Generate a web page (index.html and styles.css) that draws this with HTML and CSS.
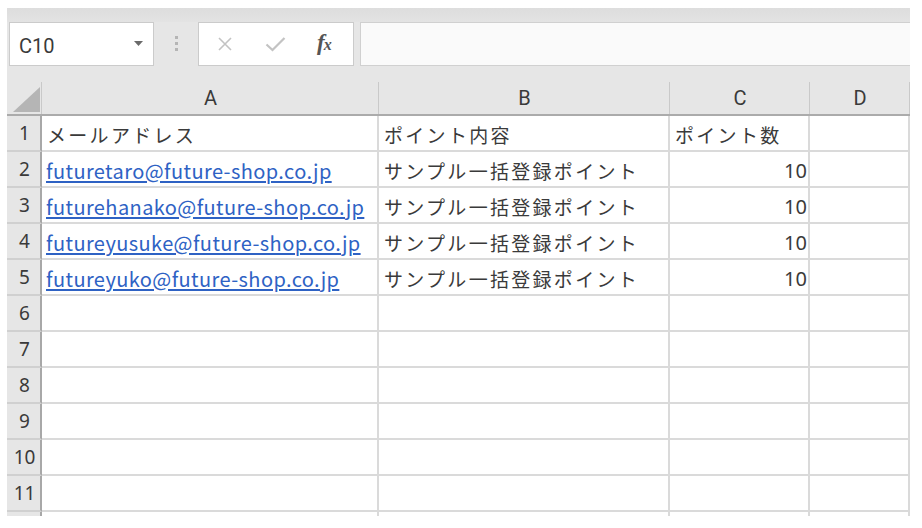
FILE: index.html
```html
<!DOCTYPE html>
<html lang="ja">
<head>
<meta charset="utf-8">
<title>Sheet</title>
<link rel="stylesheet" href="styles.css">
</head>
<body>
<div class="excel">
  <div class="topband"></div>
  <div class="formula-bar">
    <div class="namebox">
      <span class="name">C10</span>
      <svg class="drop" width="9" height="5" viewBox="0 0 9 5"><path d="M0 0H9L4.5 5Z" fill="#6a6a6a"/></svg>
    </div>
    <div class="grip"><i></i><i></i><i></i></div>
    <div class="fbtns">
      <svg width="16" height="16" viewBox="0 0 16 16"><path d="M2 2L14 14M14 2L2 14" stroke="#c3c3c3" stroke-width="1.6" fill="none"/></svg>
      <svg width="21" height="16" viewBox="0 0 21 16"><path d="M1.5 8.5L7.5 14L19.5 2" stroke="#c3c3c3" stroke-width="2.2" fill="none"/></svg>
      <span class="fx">f<span class="fxx">x</span></span>
    </div>
    <div class="finput"></div>
  </div>
  <div class="sheet">
    <div class="corner"><span class="tri"></span></div>
    <div class="ch">A</div>
    <div class="ch">B</div>
    <div class="ch">C</div>
    <div class="ch">D</div>

    <div class="rh">1</div>
    <div class="c jp">メールアドレス</div>
    <div class="c jp">ポイント内容</div>
    <div class="c jp">ポイント数</div>
    <div class="c"></div>

    <div class="rh">2</div>
    <div class="c"><a class="mail">futuretaro@future-shop.co.jp</a></div>
    <div class="c jp">サンプル一括登録ポイント</div>
    <div class="c num">10</div>
    <div class="c"></div>

    <div class="rh">3</div>
    <div class="c"><a class="mail">futurehanako@future-shop.co.jp</a></div>
    <div class="c jp">サンプル一括登録ポイント</div>
    <div class="c num">10</div>
    <div class="c"></div>

    <div class="rh">4</div>
    <div class="c"><a class="mail">futureyusuke@future-shop.co.jp</a></div>
    <div class="c jp">サンプル一括登録ポイント</div>
    <div class="c num">10</div>
    <div class="c"></div>

    <div class="rh">5</div>
    <div class="c"><a class="mail">futureyuko@future-shop.co.jp</a></div>
    <div class="c jp">サンプル一括登録ポイント</div>
    <div class="c num">10</div>
    <div class="c"></div>

    <div class="rh">6</div><div class="c"></div><div class="c"></div><div class="c"></div><div class="c"></div>
    <div class="rh">7</div><div class="c"></div><div class="c"></div><div class="c"></div><div class="c"></div>
    <div class="rh">8</div><div class="c"></div><div class="c"></div><div class="c"></div><div class="c"></div>
    <div class="rh">9</div><div class="c"></div><div class="c"></div><div class="c"></div><div class="c"></div>
    <div class="rh">10</div><div class="c"></div><div class="c"></div><div class="c"></div><div class="c"></div>
    <div class="rh">11</div><div class="c"></div><div class="c"></div><div class="c"></div><div class="c"></div>
    <div class="rh"></div><div class="c"></div><div class="c"></div><div class="c"></div><div class="c"></div>
  </div>
</div>
</body>
</html>
```
FILE: styles.css
```css
html, body {
  margin: 0;
  padding: 0;
  background: #ffffff;
}
body {
  font-family: "Noto Sans CJK JP", "Noto Sans", sans-serif;
  color: #333;
}
.excel {
  margin: 8px 0 0 7px;
  width: 903px;
  height: 508px;
  overflow: hidden;
  background: #e6e6e6;
}
.topband {
  height: 14px;
  background: linear-gradient(#dddddd, #e3e3e3);
}
.formula-bar {
  display: flex;
  height: 44px;
  padding-left: 2px;
  margin-bottom: 14px;
}
.namebox {
  box-sizing: border-box;
  width: 145px;
  height: 44px;
  background: #fff;
  border: 1px solid #cbcbcb;
  display: flex;
  align-items: center;
  justify-content: space-between;
  padding: 0 10px 0 9px;
}
.name {
  font-family: Roboto, "Noto Sans", sans-serif;
  font-size: 20px;
  color: #3a3a3a;
  padding-top: 3px;
}
.drop {
  margin-top: -2px;
}
.grip {
  width: 44px;
  display: flex;
  flex-direction: column;
  align-items: center;
  justify-content: center;
  gap: 3px;
  padding-bottom: 2px;
}
.grip i {
  width: 3px;
  height: 3px;
  background: #b5b5b5;
}
.fbtns {
  box-sizing: border-box;
  width: 156px;
  height: 44px;
  background: #fff;
  border: 1px solid #cbcbcb;
  display: flex;
  align-items: center;
  padding: 0 0 0 18px;
}
.fbtns svg:first-child {
  margin-right: 32px;
}
.fbtns svg:nth-child(2) {
  margin-right: 31px;
}
.fx {
  font-family: "Liberation Serif", "DejaVu Serif", serif;
  font-style: italic;
  font-weight: bold;
  font-size: 23px;
  color: #555;
  letter-spacing: -1px;
  margin-top: -2px;
}
.fxx {
  font-size: 16px;
}
.finput {
  flex: 1;
  margin-left: 6px;
  height: 44px;
  box-sizing: border-box;
  background: #fafafa;
  border: 1px solid #d0d0d0;
  border-right: none;
}
.sheet {
  display: grid;
  grid-template-columns: 35px 337px 291px 140px 100px;
  grid-auto-rows: 36px;
}
.corner, .ch {
  box-sizing: border-box;
  border-bottom: 2px solid #ababab;
  background-color: #e6e6e6;
  background-image: linear-gradient(#c9c9c9, #c9c9c9);
  background-size: 1px 32px;
  background-position: right bottom;
  background-repeat: no-repeat;
}
.corner {
  position: relative;
}
.tri {
  position: absolute;
  left: 6px;
  bottom: 2px;
  width: 27px;
  height: 25px;
  background: #b5b5b5;
  clip-path: polygon(100% 0, 100% 100%, 0 100%);
}
.ch {
  display: flex;
  align-items: center;
  justify-content: center;
  font-family: Roboto, "Noto Sans", sans-serif;
  font-size: 20px;
  color: #3a3a3a;
  padding-top: 2px;
}
.rh {
  box-sizing: border-box;
  background: #e6e6e6;
  border-right: 2px solid #a8a8a8;
  border-bottom: 2px solid #d0d0d0;
  display: flex;
  align-items: center;
  justify-content: center;
  font-family: "Noto Sans", sans-serif;
  font-size: 19px;
  color: #3a3a3a;
  padding-left: 2px;
}
.c {
  box-sizing: border-box;
  background: #fff;
  border-right: 2px solid #dadada;
  border-bottom: 2px solid #dadada;
  display: flex;
  align-items: center;
  padding: 2px 0 0 4px;
  white-space: nowrap;
  overflow: visible;
  font-size: 19px;
}
.jp {
  letter-spacing: 2.3px;
  padding-left: 5px;
  color: #3a3a3a;
}
.mail {
  color: #2e62c4;
  text-decoration: underline;
  text-underline-offset: 2px;
  font-size: 20px;
  letter-spacing: 0.4px;
}
.num {
  justify-content: flex-end;
  padding-right: 1px;
  font-family: "Noto Sans", sans-serif;
  font-size: 20px;
  color: #3a3a3a;
}
```
